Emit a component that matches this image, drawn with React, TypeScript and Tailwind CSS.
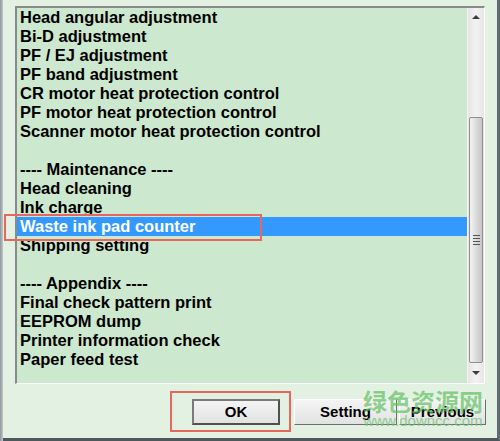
import React from "react";

const items: { t: string; sel?: boolean }[] = [
  { t: "Head angular adjustment" },
  { t: "Bi-D adjustment" },
  { t: "PF / EJ adjustment" },
  { t: "PF band adjustment" },
  { t: "CR motor heat protection control" },
  { t: "PF motor heat protection control" },
  { t: "Scanner motor heat protection control" },
  { t: "" },
  { t: "---- Maintenance ----" },
  { t: "Head cleaning" },
  { t: "Ink charge" },
  { t: "Waste ink pad counter", sel: true },
  { t: "Shipping setting" },
  { t: "" },
  { t: "---- Appendix ----" },
  { t: "Final check pattern print" },
  { t: "EEPROM dump" },
  { t: "Printer information check" },
  { t: "Paper feed test" },
];

function Btn({ label, w, def }: { label: string; w: string; def?: boolean }) {
  return (
    <div
      className={`${w} h-[26px] flex items-center justify-center text-[15px] font-bold text-black bg-gradient-to-b from-[#f4f4f4] to-[#e2e2e2] ${
        def
          ? "border-2 border-t-[#7a7a7a] border-l-[#7a7a7a] border-r-[#505050] border-b-[#505050]"
          : "border border-t-[#ffffff] border-l-[#ffffff] border-r-[#6e6e6e] border-b-[#6e6e6e]"
      }`}
    >
      {label}
    </div>
  );
}

export default function App() {
  return (
    <div
      className="relative w-[500px] h-[441px] overflow-hidden bg-[#e3f1e3] flex"
      style={{ fontFamily: '"Liberation Sans", Arial, sans-serif' }}
    >
      {/* left window frame */}
      <div className="w-[3px] h-full bg-gradient-to-r from-[#8d949b] to-[#c4c9cc]" />
      <div className="flex-1 flex flex-col border-r-[3px] border-r-[#5f6a74] border-b-[3px] border-b-[#4e565e]">
        {/* listbox */}
        <div className="ml-[12px] mt-[6px] w-[470px] h-[378px] flex border-t-2 border-l-2 border-t-[#8a8a8a] border-l-[#8a8a8a] border-r border-b border-r-[#ffffff] border-b-[#ffffff] bg-[#cce8cf]">
          <div className="flex-1 flex flex-col">
            {items.map((it, i) => (
              <div
                key={i}
                className={`h-[19px] pl-[3px] leading-[19px] text-[16.5px] font-bold whitespace-nowrap ${
                  it.sel ? "bg-[#3399ff] text-white" : "text-black"
                }`}
              >
                {it.t}
              </div>
            ))}
          </div>
          {/* scrollbar */}
          <div className="w-[17px] h-full flex flex-col bg-gradient-to-r from-[#e6e6e6] via-[#f2f2f2] to-[#e6e6e6] border-l border-l-[#f5f5f5]">
            <div className="h-[17px] flex items-center justify-center">
              <svg width="8" height="5" viewBox="0 0 8 5">
                <path d="M0 5 L4 1 L8 5 Z" fill="#3c3c3c" />
              </svg>
            </div>
            <div className="h-[92px]" />
            <div className="h-[246px] mx-[1px] rounded-[2px] border border-[#8f8f8f] bg-gradient-to-r from-[#f3f3f3] via-[#dcdcdc] to-[#c6c6c6] flex items-center justify-center">
              <div className="flex flex-col gap-[2px]">
                <div className="w-[7px] h-[1px] bg-[#555]" />
                <div className="w-[7px] h-[1px] bg-[#555]" />
                <div className="w-[7px] h-[1px] bg-[#555]" />
                <div className="w-[7px] h-[1px] bg-[#555]" />
              </div>
            </div>
            <div className="flex-1 flex items-center justify-center">
              <svg width="8" height="5" viewBox="0 0 8 5">
                <path d="M0 0 L8 0 L4 4 Z" fill="#3c3c3c" />
              </svg>
            </div>
          </div>
        </div>
        {/* buttons */}
        <div className="mt-[15px] flex">
          <div className="ml-[189px]">
            <Btn label="OK" w="w-[88px]" def />
          </div>
          <div className="ml-[14px] flex gap-[2px]">
            <Btn label="Setting" w="w-[103px]" />
            <Btn label="Previous" w="w-[87px]" />
          </div>
        </div>
      </div>

      {/* red highlight boxes */}
      <div className="absolute left-[4px] top-[214px] w-[258px] h-[27px] border-2 border-[#e8675c]" />
      <div className="absolute left-[170px] top-[391px] w-[121px] h-[41px] border-2 border-[#e8675c]" />

      {/* watermark */}
      <div className="absolute left-[363px] top-[387px] flex flex-col items-center pointer-events-none">
        <div
          className="text-[24px] leading-[27px] font-bold text-[#5fbf5f]/70"
          style={{ fontFamily: '"Noto Sans CJK SC", sans-serif' }}
        >
          绿色资源网
        </div>
        <div className="text-[15px] leading-[15px] text-[#6cc46c]/75 -mt-[1px]">www.downcc.com</div>
      </div>
    </div>
  );
}
